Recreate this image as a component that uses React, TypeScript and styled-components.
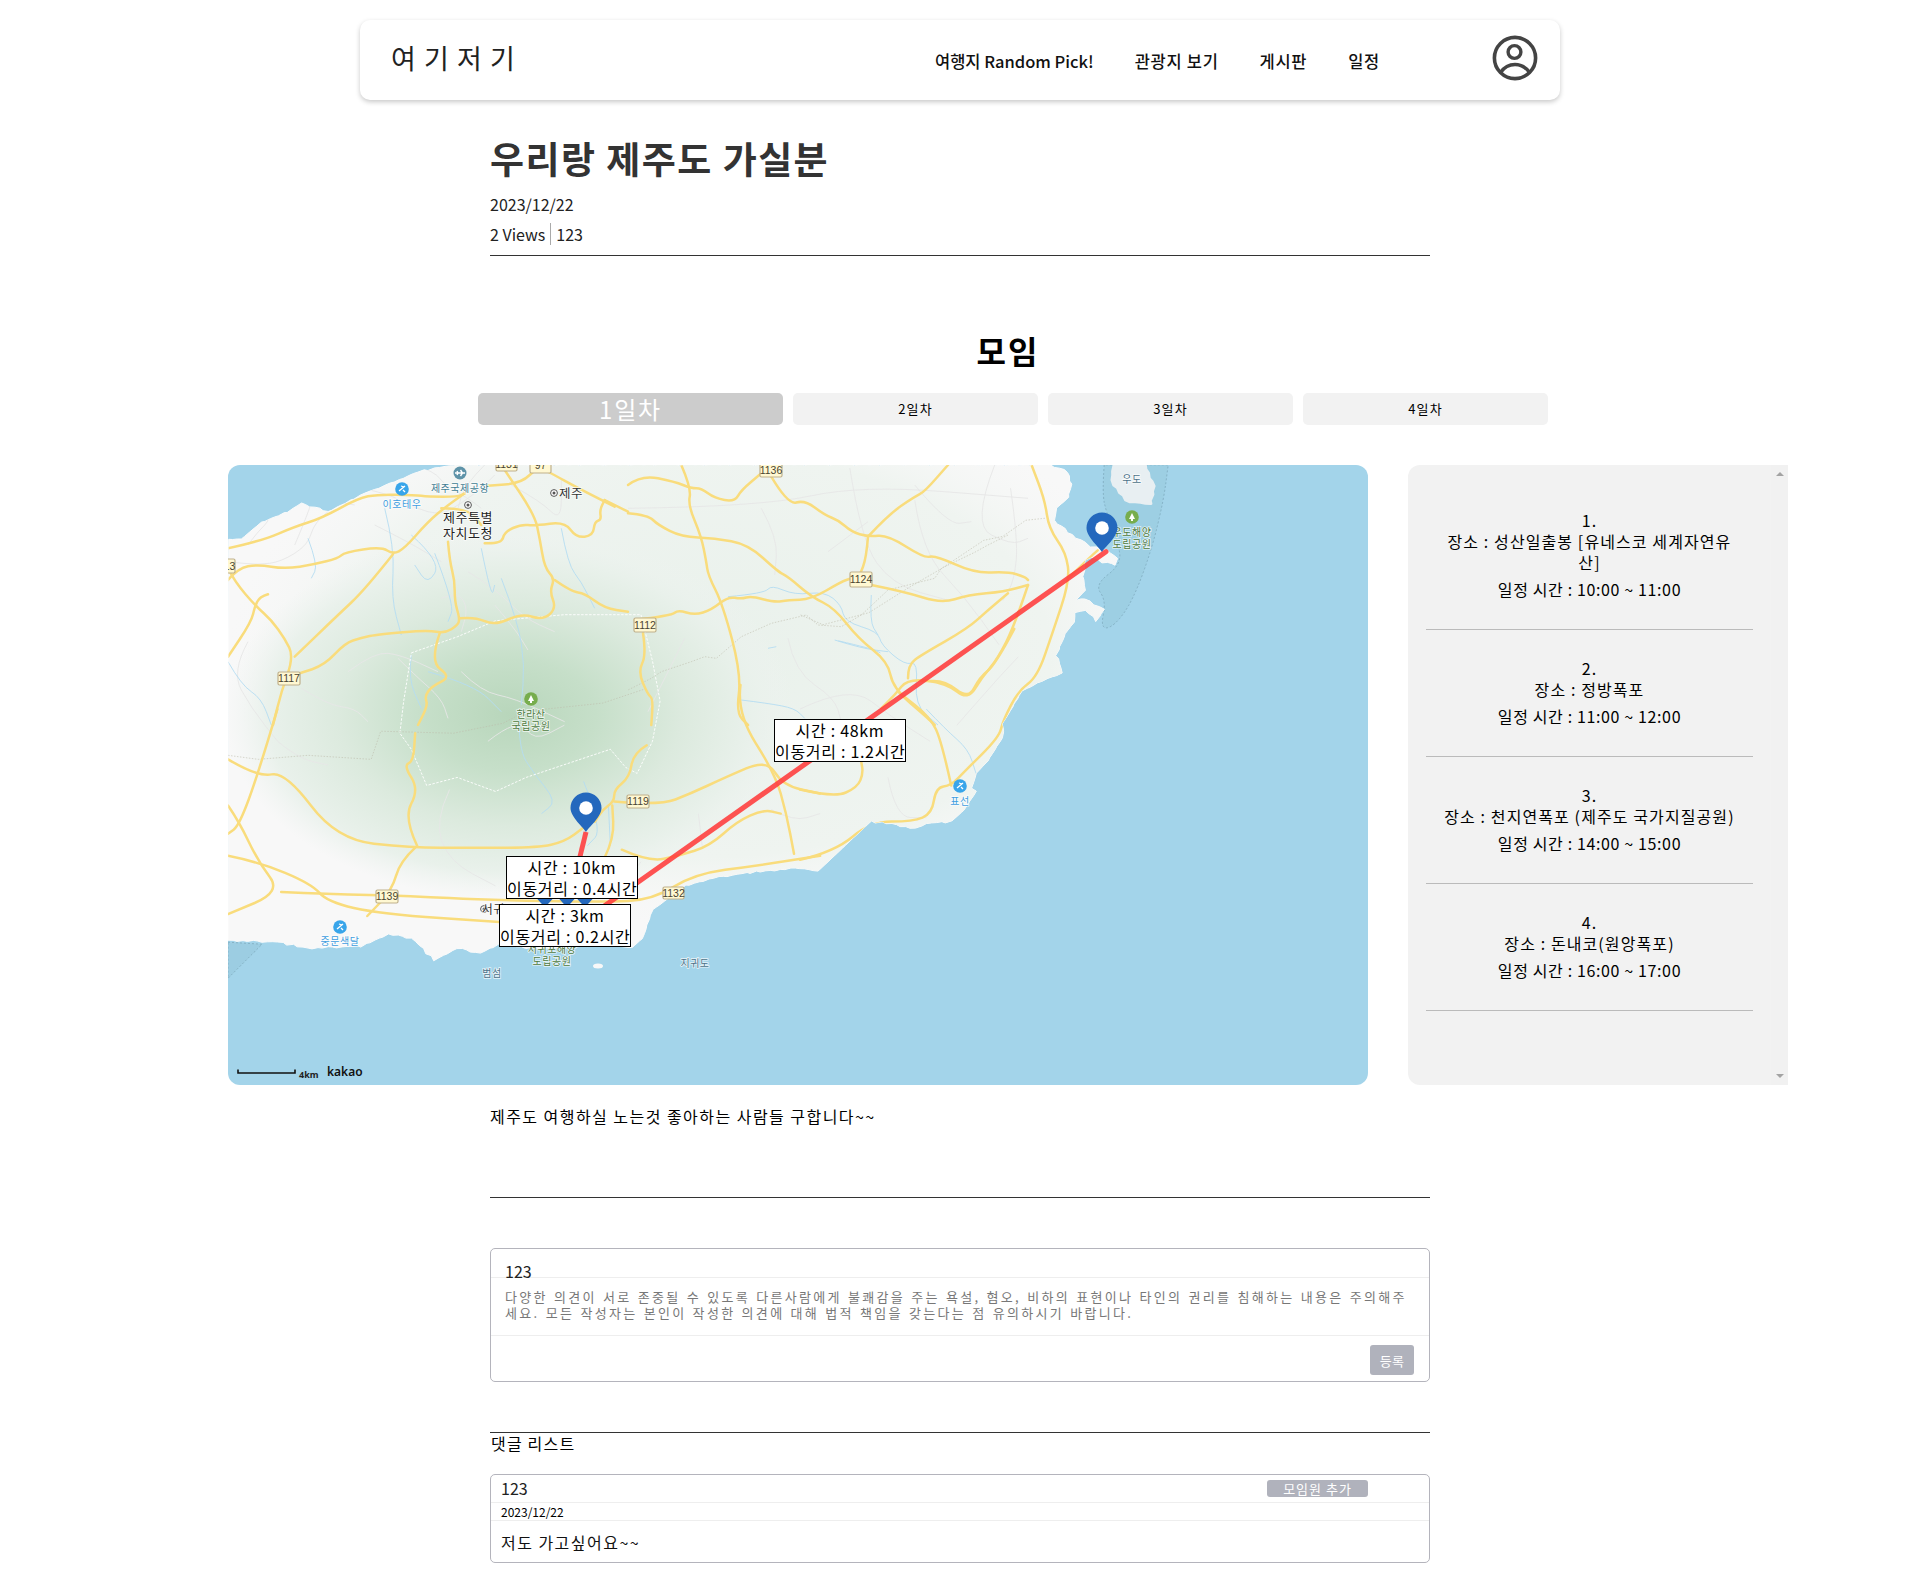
import React from 'react';
import styled, { createGlobalStyle } from 'styled-components';

const GlobalStyle = createGlobalStyle`
  html, body { margin: 0; padding: 0; background: #fff; }
  body { font-family: "Noto Sans CJK KR", "Noto Sans", sans-serif; color: #000; }
  * { box-sizing: border-box; }
`;

const Page = styled.div`
  width: 1920px;
  height: 1575px;
  overflow: hidden;
`;
const TopBar = styled.header`
  width: 1200px;
  height: 80px;
  margin: 20px auto 0;
  padding: 0 0 0 31px;
  display: flex;
  align-items: center;
  border-radius: 10px;
  background: #fff;
  box-shadow: 0 2px 5px rgba(0, 0, 0, 0.22);
`;
const Logo = styled.div`
  width: 125px;
  font-size: 27px;
  letter-spacing: 8.2px;
  line-height: 36px;
  margin-top: -4px;
  white-space: nowrap;
  color: #222;
`;
const Nav = styled.nav`
  display: flex;
  gap: 41px;
  margin-left: 419px;
  margin-top: 1px;
`;
const NavLink = styled.a<{ $spread?: boolean }>`
  font-size: 16.5px;
  font-weight: 500;
  line-height: 24px;
  color: #111;
  white-space: nowrap;
  letter-spacing: ${(p) => (p.$spread ? '0.7px' : '0')};
`;
const Avatar = styled.svg`
  width: 50px;
  height: 50px;
  margin-left: auto;
  margin-right: 20px;
  margin-top: -4px;
`;
const Column = styled.div`
  width: 940px;
  margin: 0 auto;
`;
const TitleBlock = styled(Column)`
  padding: 33px 0 10px;
  border-bottom: 1px solid #333;
`;
const Title = styled.h1`
  margin: 0;
  font-size: 37px;
  font-weight: 700;
  line-height: 50px;
  letter-spacing: 1.45px;
  color: #333;
`;
const DateText = styled.div`
  margin-top: 9.5px;
  font-size: 16px;
  line-height: 22px;
  color: #222;
`;
const Meta = styled.div`
  margin-top: 8.5px;
  display: flex;
  font-size: 16px;
  line-height: 22px;
  color: #222;
`;
const MetaAuthor = styled.span`
  margin-left: 5px;
  padding-left: 5px;
  border-left: 1px solid #aaa;
`;
const Wide = styled.section`
  width: 1560px;
  margin-left: 228px;
`;
const Heading = styled.h2`
  margin: 71px 0 0;
  font-size: 32px;
  font-weight: 700;
  line-height: 46px;
  letter-spacing: 2px;
  text-align: center;
`;
const Tabs = styled.div`
  margin-top: 20px;
  padding-left: 250px;
  display: flex;
  gap: 10px;
`;
const Tab = styled.button<{ $active?: boolean }>`
  width: ${(p) => (p.$active ? 305 : 245)}px;
  height: 32px;
  padding: 0;
  border: 0;
  border-radius: 5px;
  font-family: inherit;
  line-height: 32px;
  font-size: ${(p) => (p.$active ? 24 : 13)}px;
  letter-spacing: ${(p) => (p.$active ? 1.8 : 1.2)}px;
  background: ${(p) => (p.$active ? '#ccc' : '#f2f2f2')};
  color: ${(p) => (p.$active ? '#fff' : '#000')};
`;
const MapRow = styled.div`
  margin-top: 40px;
  display: flex;
  gap: 40px;
`;
const MapFrame = styled.div`
  position: relative;
  width: 1140px;
  height: 620px;
  border-radius: 12px;
  overflow: hidden;
  background: #a3d4ea;
`;
const MapArt = styled.svg`
  display: block;
  width: 1140px;
  height: 620px;
`;
const RouteLabel = styled.div<{ $x: number; $y: number }>`
  position: absolute;
  left: ${(p) => p.$x}px;
  top: ${(p) => p.$y}px;
  width: 132px;
  height: 43px;
  background: #fff;
  border: 1px solid #000;
  font-size: 16px;
  line-height: 20.5px;
  letter-spacing: 0.7px;
  text-align: center;
  white-space: nowrap;
`;
const Panel = styled.aside`
  width: 380px;
  height: 620px;
  display: flex;
  background: #f2f2f2;
  border-radius: 12px 0 0 12px;
`;
const StopList = styled.div`
  flex: 1;
  padding: 16.7px 18px 0;
`;
const Stop = styled.div`
  padding: 28px 16px 29px;
  border-bottom: 1px solid #bbb;
  font-size: 16px;
  line-height: 21.33px;
  letter-spacing: 1.1px;
  text-align: center;
  word-break: break-all;
`;
const StopTime = styled.div`
  margin-top: 5px;
  letter-spacing: 0.63px;
`;
const ScrollColumn = styled.div`
  width: 17px;
  display: flex;
  flex-direction: column;
  justify-content: space-between;
  align-items: center;
  padding: 7px 0;
  background: #f1f1f1;
`;
const ArrowUp = styled.span`
  width: 0;
  height: 0;
  border-left: 4px solid transparent;
  border-right: 4px solid transparent;
  border-bottom: 4px solid #a3a3a3;
`;
const ArrowDown = styled.span`
  width: 0;
  height: 0;
  border-left: 4px solid transparent;
  border-right: 4px solid transparent;
  border-top: 4px solid #a3a3a3;
`;
const Description = styled(Column)`
  margin-top: 20px;
  height: 93px;
  border-bottom: 1px solid #333;
  font-size: 16px;
  line-height: 22px;
  letter-spacing: 1.46px;
`;
const CommentForm = styled(Column)`
  margin-top: 50px;
  height: 134px;
  border: 1px solid #b4b4bc;
  border-radius: 5px;
  display: flex;
  flex-direction: column;
`;
const FormName = styled.div`
  height: 29px;
  padding: 12px 14px 0;
  border-bottom: 1px solid #eee;
  font-size: 16px;
  line-height: 20px;
  color: #222;
`;
const FormHint = styled.div`
  height: 58px;
  padding: 11px 14px 0;
  border-bottom: 1px solid #eee;
  font-size: 13px;
  line-height: 16px;
  letter-spacing: 2.3px;
  word-spacing: 1px;
  color: #777;
  word-break: break-all;
`;
const FormFoot = styled.div`
  flex: 1;
  display: flex;
  justify-content: flex-end;
  padding: 9px 15px 0 0;
`;
const SubmitButton = styled.button`
  width: 44px;
  height: 30px;
  padding: 0;
  border: 0;
  border-radius: 3px;
  background: #b0b2bc;
  color: #fff;
  font-family: inherit;
  font-size: 13px;
  letter-spacing: 0.4px;
`;
const ListHead = styled(Column)`
  margin-top: 50px;
  border-top: 1px solid #333;
  font-size: 16px;
  line-height: 20px;
  letter-spacing: 1.2px;
  padding-left: 1px;
`;
const CommentCard = styled(Column)`
  margin-top: 21px;
  height: 89px;
  border: 1px solid #b4b4bc;
  border-radius: 5px;
`;
const CardTop = styled.div`
  height: 28px;
  padding: 0 61px 0 10px;
  display: flex;
  align-items: center;
  justify-content: space-between;
  border-bottom: 1px solid #eee;
  font-size: 16px;
  line-height: 22px;
  color: #222;
`;
const CardName = styled.span`
  margin-top: -2px;
`;
const AddButton = styled.button`
  width: 101px;
  height: 17px;
  padding: 0;
  border: 0;
  border-radius: 3px;
  background: #b0b2bc;
  color: #fff;
  font-family: inherit;
  font-size: 13px;
  letter-spacing: 1px;
  line-height: 17px;
`;
const CardDate = styled.div`
  height: 18px;
  padding-left: 10px;
  border-bottom: 1px solid #eee;
  font-size: 12px;
  line-height: 18px;
`;
const CardBody = styled.div`
  padding: 10px 0 0 10px;
  font-size: 16px;
  line-height: 22px;
  letter-spacing: 1.47px;
  color: #111;
`;

type P = number[];
const z3 = (p: P): P => [p[0] * 0.3827 - 8, p[1] * 0.4018 - 5];
const z4 = (p: P): P => [p[0] * 0.3827 + 572, p[1] * 0.4018 - 5];
const z10 = (p: P): P => [p[0] / 3, p[1] / 3];
const z11 = (p: P): P => [400 + p[0] / 3, p[1] / 3];

const pts = (flat: number[], f: (p: P) => P): P[] => {
  const out: P[] = [];
  for (let i = 0; i < flat.length; i += 2) out.push(f([flat[i], flat[i + 1]]));
  return out;
};
const fmt = (q: P) => `${q[0].toFixed(1)} ${q[1].toFixed(1)}`;
const line = (p: P[]) => 'M' + p.map(fmt).join('L');
const poly = (flat: number[], f: (p: P) => P) => pts(flat, f).join(' ');
const curve = (p: P[]) => {
  if (p.length < 3) return line(p);
  let d = `M${fmt(p[0])}`;
  for (let i = 1; i < p.length - 1; i++) {
    const mid = [(p[i][0] + p[i + 1][0]) / 2, (p[i][1] + p[i + 1][1]) / 2];
    d += `Q${fmt(p[i])} ${fmt(mid)}`;
  }
  return d + `L${fmt(p[p.length - 1])}`;
};
/* break a coast into short rough steps */
const roughen = (p: P[]) => {
  const out: P[] = [];
  let seed = 1;
  for (let i = 0; i < p.length - 1; i++) {
    const [ax, ay] = p[i];
    const [bx, by] = p[i + 1];
    const len = Math.hypot(bx - ax, by - ay);
    const n = Math.max(1, Math.round(len / 5));
    for (let k = 0; k < n; k++) {
      const t = k / n;
      seed = (seed * 137 + 53) % 211;
      const a = (seed / 211 - 0.5) * 1.8;
      out.push([ax + (bx - ax) * t + a, ay + (by - ay) * t - a]);
    }
  }
  out.push(p[p.length - 1]);
  return out;
};

const landPath =
  line([
    ...roughen([
      ...pts([0, 225, 40, 222, 100, 172, 180, 140, 220, 115, 300, 140, 380, 100, 410, 85, 500, 50, 570, 20, 650, 5, 680, 0], z10),
      ...pts(
        [655, 12, 700, 30, 710, 60, 700, 95, 670, 120, 665, 150, 700, 180, 745, 205, 760, 215, 800, 225, 830, 245, 825, 260, 790, 255, 765, 240, 745, 250, 740, 300, 745, 325, 720, 350, 745, 345, 795, 372, 775, 400, 745, 375, 720, 378, 715, 405, 695, 430, 670, 485, 685, 530, 620, 555, 580, 575, 555, 615, 530, 655, 530, 690, 490, 750, 460, 780, 450, 815, 460, 825, 430, 870, 395, 900, 330, 905, 300, 918, 240, 905, 185, 900, 140, 940, 90, 985, 45, 1025, 0, 1015],
        z4
      ),
      ...pts([1400, 1025, 1290, 1040, 1215, 1060, 1130, 1120, 1105, 1190, 1075, 1215, 1000, 1205, 900, 1215, 800, 1215, 740, 1200, 680, 1228, 620, 1215, 560, 1245, 500, 1190, 440, 1180, 370, 1210, 230, 1215, 150, 1200, 21, 1195], z3),
    ]),
    [0, 470],
  ]) + 'Z';

const roads: P[][] = [
  ...[
    [0, 250, 100, 228, 200, 185, 280, 160, 390, 100, 450, 88, 560, 90, 600, 95, 690, 95, 710, 85],
    [0, 345, 30, 310, 90, 298, 170, 312, 260, 298, 330, 280, 350, 262, 460, 245, 495, 268, 530, 250, 600, 170, 660, 120, 710, 85],
    [495, 268, 410, 375, 330, 450, 200, 575],
    [660, 230, 665, 290, 680, 345, 680, 410, 695, 460, 690, 480, 650, 505, 600, 495, 450, 508, 400, 518, 350, 535, 290, 600, 215, 625],
    [695, 460, 740, 455, 800, 482, 880, 445, 945, 465, 985, 430, 965, 380, 980, 340, 950, 310, 935, 220, 920, 150, 830, 15],
    [980, 345, 1030, 380, 1070, 385, 1130, 430, 1200, 440],
    [635, 505, 605, 590, 670, 635, 610, 665, 590, 695, 600, 720, 570, 780],
    [0, 310, 20, 350, 85, 425, 130, 465, 170, 520, 197, 575, 160, 680, 135, 780],
    [120, 388, 95, 395, 80, 425, 70, 470, 0, 575],
    [770, 235, 820, 237, 830, 200, 880, 178, 920, 182, 1010, 170, 1045, 218, 1095, 212, 1100, 170, 1120, 165, 1115, 135, 1130, 105],
    [1160, 125, 1060, 75, 970, 25, 930, 5, 880, 55, 780, 62],
    [1130, 105, 1200, 140],
    [640, 130, 720, 130, 760, 180],
  ].map((r) => pts(r, z10)),
  ...[
    [0, 60, 40, 30, 140, 50, 190, 70, 220, 70, 260, 100, 320, 110, 340, 75, 400, 25],
    [160, 0, 190, 70, 180, 120, 220, 215, 235, 290, 240, 330, 285, 420, 340, 630, 325, 745, 360, 780],
    [0, 145, 60, 150, 90, 180, 160, 215, 260, 220, 360, 238, 450, 320, 480, 335, 550, 395, 620, 430, 690, 520, 780, 590, 795, 670, 900, 760, 920, 780],
    [20, 465, 130, 452, 150, 435, 200, 450, 250, 435, 300, 395, 340, 402, 370, 393, 440, 412, 480, 405, 550, 403, 640, 350, 670, 340],
    [430, 35, 480, 120, 530, 105, 590, 150, 630, 165, 670, 200, 720, 215, 780, 210, 890, 280, 920, 270, 1040, 325, 1140, 320, 1190, 335, 1200, 345],
    [720, 215, 715, 280, 695, 330],
    [730, 360, 830, 380, 940, 415, 1020, 390, 1130, 380, 1200, 360],
    [720, 215, 780, 150, 860, 95, 890, 80, 960, 0],
    [1200, 360, 1160, 480, 1110, 580, 1060, 640, 1020, 705, 955, 655, 840, 640, 800, 690, 760, 730],
    [840, 640, 840, 600, 880, 570, 1020, 490, 1080, 435, 1140, 385],
    [45, 505, 55, 570, 30, 620, 60, 690, 75, 700, 70, 780],
  ].map((r) => pts(r, z11)),
  ...[
    [1115, 710, 1080, 730, 1070, 790, 1030, 820, 1030, 850, 1000, 870, 980, 900],
    [1030, 850, 1150, 860, 1230, 830, 1320, 790, 1430, 745, 1470, 810, 1568, 830],
    [1360, 560, 1350, 630, 1450, 780, 1480, 880, 1500, 980],
    [21, 745, 100, 790, 170, 775, 305, 945, 500, 965, 650, 965, 830, 965, 900, 950, 950, 915],
    [150, 620, 100, 780, 50, 910, 21, 930],
    [21, 860, 50, 900, 100, 1000, 160, 1075, 21, 1130],
    [21, 985, 100, 1000, 240, 1055, 280, 1100, 420, 1130, 730, 1150],
    [160, 1075, 280, 1080, 500, 1085, 700, 1095, 1000, 1100, 1130, 1095, 1240, 1030, 1400, 1010, 1568, 985],
    [510, 965, 470, 1000, 450, 1070, 385, 1135],
    [515, 960, 480, 890, 520, 820, 480, 760, 505, 750, 510, 680],
    [1005, 990, 1030, 940, 1025, 860],
    [1050, 970, 1120, 1000, 1200, 985, 1280, 960, 1350, 900, 1420, 870, 1465, 880],
  ].map((r) => pts(r, z3)),
  ...[
    [0, 820, 90, 840, 150, 815, 165, 780, 160, 750],
    [0, 995, 90, 975, 185, 900, 295, 900, 345, 880, 355, 815, 395, 810, 430, 775, 520, 690, 530, 650, 570, 575, 620, 540, 660, 430, 705, 300, 695, 230, 650, 170, 640, 100, 605, 12],
    [395, 810, 370, 700, 340, 640, 260, 580],
    [700, 295, 760, 240, 778, 225],
    [560, 420, 510, 510, 470, 540, 440, 595, 380, 550, 320, 550],
  ].map((r) => pts(r, z4)),
];

const minorSets: { f: (p: P) => P; lines: number[][] }[] = [
  {
    f: z10,
    lines: [
      [0, 130, 100, 105, 170, 120, 260, 100, 380, 120],
      [200, 240, 260, 100, 250, 70],
      [-10, 175, 60, 135, 100, 130, 130, 160, 90, 200, 60, 240],
      [400, 70, 480, 85, 560, 130, 640, 150, 700, 115, 760, 70, 800, 30],
      [560, 0, 620, 20, 650, 60, 720, 100, 760, 130],
      [770, 0, 710, 60, 690, 130],
      [850, 60, 940, 110, 1000, 170, 1000, 40],
      [440, 180, 540, 230, 640, 290],
      [720, 320, 800, 370, 890, 460, 980, 500],
      [800, 420, 860, 490, 900, 555],
      [640, 400, 690, 380, 720, 430, 700, 500],
      [510, 580, 560, 630, 640, 700, 660, 760],
      [300, 140, 260, 170, 240, 240, 160, 290, 90, 300, 0, 290],
      [700, 620, 760, 680, 860, 700, 1010, 770],
      [360, 620, 440, 560, 520, 570, 630, 620],
      [150, 830, 210, 880, 300, 900],
      [220, 670, 300, 720, 380, 730, 420, 770],
      [60, 530, 10, 620, 70, 730, 150, 830],
    ],
  },
  {
    f: z11,
    lines: [
      [0, 130, 400, 125, 700, 60, 1200, 100],
      [600, 260, 720, 170],
      [860, 60, 960, 180, 1030, 170],
      [60, 740, 170, 520],
      [1100, 0, 1030, 180, 1150, 240, 1200, 220],
      [400, 130, 450, 220, 440, 330],
      [480, 520, 500, 620, 620, 700, 640, 770],
    ],
  },
  {
    f: z3,
    lines: [
      [700, 700, 780, 640, 820, 700, 900, 660],
      [600, 820, 560, 900, 600, 1000, 720, 1060],
      [900, 990, 1000, 1000, 1050, 1060, 1100, 1000],
      [1250, 880, 1260, 960],
      [1440, 870, 1500, 900, 1568, 880],
    ],
  },
  {
    f: z4,
    lines: [
      [300, 100, 320, 230, 430, 340, 520, 460],
      [130, 20, 160, 200, 240, 310, 390, 350],
      [550, 70, 570, 200, 560, 300, 530, 350],
      [0, 620, 130, 560, 240, 640, 340, 700],
      [230, 790, 250, 890, 330, 890],
      [570, 490, 520, 540, 410, 660],
    ],
  },
];

const streamSets: { f: (p: P) => P; lines: number[][] }[] = [
  {
    f: z10,
    lines: [
      [470, 130, 500, 250, 490, 400, 520, 510],
      [550, 210, 640, 290, 600, 360, 560, 300],
      [620, 265, 680, 420, 660, 470],
      [760, 250, 790, 400, 800, 360],
      [820, 340, 870, 470, 890, 600, 880, 720],
      [1000, 190, 1020, 300, 1060, 350, 1100, 430],
      [240, 220, 270, 300, 250, 340],
      [0, 590, 40, 660, 100, 700, 130, 780],
      [550, 570, 540, 640, 580, 730],
      [600, 620, 740, 660, 820, 740],
    ],
  },
  {
    f: z11,
    lines: [
      [300, 395, 410, 385, 430, 360, 500, 390, 590, 380, 640, 420, 650, 470, 750, 500, 760, 540, 830, 600, 870, 590, 860, 720, 930, 780],
      [620, 525, 700, 550, 780, 560],
      [340, 705, 420, 715, 500, 730, 530, 760],
      [730, 390, 725, 470, 750, 510],
      [420, 550, 445, 545],
    ],
  },
  {
    f: z3,
    lines: [
      [780, 620, 780, 720, 820, 780, 880, 850, 840, 880],
      [950, 800, 1000, 920, 960, 960],
      [1015, 860, 1020, 960],
    ],
  },
  {
    f: z4,
    lines: [
      [330, 620, 380, 670, 440, 720, 460, 780],
      [100, 450, 190, 470, 210, 480],
    ],
  },
];

const trails: { f: (p: P) => P; r: number[] }[] = [
  { f: z3, r: [21, 735, 100, 745, 230, 735, 395, 745, 420, 675, 610, 680, 740, 655, 800, 625, 1000, 605, 1110, 570] },
  {
    f: z11,
    r: [1140, 210, 1080, 240, 1040, 262, 940, 310, 920, 340, 780, 375, 700, 450, 640, 485, 570, 480, 535, 450, 430, 475, 340, 515, 265, 580, 230, 575, 190, 590, 100, 620, 70, 640, 0, 675],
  },
  { f: z4, r: [640, 145, 590, 150, 530, 190, 480, 200, 370, 270, 280, 320, 180, 380, 60, 410, 0, 385] },
];

const shields = [
  { x: 50, y: 207, w: 22, h: 13, t: '1117' },
  { x: 406, y: 153, w: 22, h: 14, t: '1112' },
  { x: 532, y: -2, w: 22, h: 14, t: '1136' },
  { x: 622, y: 107, w: 22, h: 15, t: '1124' },
  { x: 268, y: -7, w: 21, h: 13, t: '1131' },
  { x: 302, y: -7, w: 21, h: 15, t: '97' },
  { x: 399, y: 330, w: 22, h: 13, t: '1119' },
  { x: 148, y: 425, w: 22, h: 13, t: '1139' },
  { x: 435, y: 422, w: 21, h: 12, t: '1132' },
  { x: -14, y: 94, w: 21, h: 14, t: '1113' },
];

const labels = [
  { x: 232, y: 27, t: '제주국제공항', s: 10, c: '#3f7c92' },
  { x: 174, y: 43, t: '이호테우', s: 10, c: '#3f9ee0' },
  { x: 240, y: 57, t: '제주특별', s: 13, c: '#222' },
  { x: 240, y: 73, t: '자치도청', s: 13, c: '#222' },
  { x: 343, y: 33, t: '제주', s: 12.5, c: '#333' },
  { x: 303, y: 253, t: '한라산', s: 10, c: '#4d7a3f' },
  { x: 303, y: 265, t: '국립공원', s: 10, c: '#4d7a3f' },
  { x: 112, y: 480, t: '중문색달', s: 10, c: '#3f9ee0' },
  { x: 271, y: 449, t: '서귀포', s: 12, c: '#333' },
  { x: 324, y: 488, t: '서귀포해양', s: 10, c: '#4d7a3f' },
  { x: 324, y: 500, t: '도립공원', s: 10, c: '#4d7a3f' },
  { x: 264, y: 512, t: '범섬', s: 10, c: '#4c7289' },
  { x: 467, y: 502, t: '지귀도', s: 10, c: '#4c7289' },
  { x: 732, y: 340, t: '표선', s: 10, c: '#3f9ee0' },
  { x: 904, y: 18, t: '우도', s: 10, c: '#4c7289' },
  { x: 904, y: 71, t: '우도해양', s: 10, c: '#4d7a3f' },
  { x: 904, y: 83, t: '도립공원', s: 10, c: '#4d7a3f' },
];

const beachIcons = [
  [174, 24],
  [112, 462],
  [732, 321],
];
const parkIcons = [
  [303, 234],
  [904, 52],
];
const places = [
  [240, 40],
  [326, 28],
  [256, 444],
];
const pins = [
  [317, 419],
  [339, 419],
  [357, 419],
  [358, 343],
  [874, 63],
];

const Pin = ({ x, y }: { x: number; y: number }) => (
  <g transform={`translate(${x} ${y})`}>
    <path d="M0 24C-2 20-15.5 9-15.5 0A15.5 15.5 0 0 1 15.5 0C15.5 9 2 20 0 24Z" fill="#2468bd" />
    <circle r="6.8" fill="#fff" />
  </g>
);

const MapDrawing = () => (
  <MapArt viewBox="0 0 1140 620">
    <defs>
      <radialGradient id="mount" cx="0.5" cy="0.5" r="0.5">
        <stop offset="0" stopColor="#b8d6bb" />
        <stop offset="0.3" stopColor="#c6dfc9" />
        <stop offset="0.6" stopColor="#dceade" />
        <stop offset="0.85" stopColor="#e9f1eb" />
        <stop offset="1" stopColor="#eef3f0" stopOpacity="0" />
      </radialGradient>
      <radialGradient id="tint" cx="0.5" cy="0.5" r="0.5">
        <stop offset="0" stopColor="#e9f1eb" />
        <stop offset="0.75" stopColor="#eff4f0" />
        <stop offset="1" stopColor="#f6f7f6" stopOpacity="0" />
      </radialGradient>
      <clipPath id="landClip">
        <path d={landPath} />
      </clipPath>
    </defs>
    <path
      d={curve(pts([795, 12, 790, 80, 800, 130, 830, 200, 840, 260, 770, 310, 800, 350, 785, 420, 820, 415, 870, 350, 920, 220, 950, 100, 962, 12], z4)) + 'Z'}
      fill="#9dcfe3"
      stroke="#7aa5b8"
      strokeWidth="0.7"
      strokeDasharray="2 2"
    />
    <path
      d={line(pts([21, 1200, 110, 1205, 21, 1290], z3)) + 'Z'}
      fill="#9ccde2"
      stroke="#7aa5b8"
      strokeWidth="0.7"
      strokeDasharray="2 2"
    />
    <path d={landPath} fill="#f8f8f8" stroke="#fbfbfb" strokeWidth="1" strokeLinejoin="round" />
    <path
      d={line(roughen(pts([820, 15, 900, 12, 925, 65, 915, 110, 850, 100, 815, 50, 820, 15], z4))) + 'Z'}
      fill="#e8eff2"
      stroke="#e8eff2"
      strokeWidth="3"
      strokeLinejoin="round"
    />
    <ellipse cx="370" cy="501" rx="5" ry="2.5" fill="#f8f8f8" />
    <g clipPath="url(#landClip)">
      <ellipse cx="470" cy="190" rx="470" ry="270" fill="url(#tint)" />
      <ellipse cx="282" cy="250" rx="285" ry="185" fill="url(#mount)" />
      {minorSets.map((set, si) =>
        set.lines.map((r, i) => (
          <path key={`${si}-${i}`} d={curve(pts(r, set.f))} fill="none" stroke="#e6e7e6" strokeWidth="0.9" />
        ))
      )}
      {streamSets.map((set, si) =>
        set.lines.map((r, i) => (
          <path key={`${si}-${i}`} d={curve(pts(r, set.f))} fill="none" stroke="#b4ddf2" strokeWidth="0.9" />
        ))
      )}
      <polyline
        points={poly(
          [500, 480, 620, 440, 720, 400, 900, 385, 1100, 385, 1130, 500, 1150, 600, 1130, 700, 1090, 780, 1060, 765, 1020, 720, 800, 790, 720, 825, 620, 790, 540, 810, 500, 720, 470, 680, 480, 600, 500, 480],
          z3
        )}
        fill="none"
        stroke="#fff"
        strokeOpacity="0.9"
        strokeWidth="1"
        strokeDasharray="2.5 1.5"
      />
      {trails.map((t, i) => (
        <polyline
          key={i}
          points={poly(t.r, t.f)}
          fill="none"
          stroke="#bcbaab"
          strokeOpacity="0.8"
          strokeWidth="0.7"
          strokeDasharray="1.5 1.5"
        />
      ))}
      {roads.map((r, i) => (
        <path
          key={i}
          d={curve(r)}
          fill="none"
          stroke="#f9dc7c"
          strokeWidth="2.5"
          strokeLinejoin="round"
          strokeLinecap="round"
        />
      ))}
    </g>
    <line x1="878" y1="86.6" x2="355" y2="456" stroke="#ff3b3b" strokeOpacity="0.88" strokeWidth="5" strokeLinecap="round" />
    <line x1="358" y1="367" x2="345" y2="420" stroke="#ff3b3b" strokeOpacity="0.88" strokeWidth="5" />
    {shields.map((s) => (
      <g key={s.t}>
        <rect x={s.x} y={s.y} width={s.w} height={s.h} rx="1.5" fill="#fff8d2" stroke="#bfb08c" strokeWidth="1.2" />
        <text
          x={s.x + s.w / 2}
          y={s.y + s.h / 2 + 3.6}
          textAnchor="middle"
          fontFamily='"Liberation Sans", sans-serif'
          fontSize="10.5"
          fill="#4a4430"
        >
          {s.t}
        </text>
      </g>
    ))}
    <circle cx="232" cy="8" r="6.5" fill="#5e93a8" />
    <path d="M227 8h10M232.5 5l2 3-2 3M229 6l1 2-1 2" fill="none" stroke="#fff" strokeWidth="1.4" />
    {beachIcons.map(([x, y], i) => (
      <g key={i}>
        <circle cx={x} cy={y} r="6.8" fill="#38a5ea" />
        <path
          d={`M${x - 3} ${y + 2}L${x + 3} ${y - 3}M${x - 1} ${y - 3}l3 1M${x + 1} ${y + 1}l2 2`}
          stroke="#fff"
          strokeWidth="1.3"
          fill="none"
        />
      </g>
    ))}
    {parkIcons.map(([x, y], i) => (
      <g key={i}>
        <circle cx={x} cy={y} r="6.8" fill="#77ad4d" />
        <path d={`M${x} ${y - 4}l3 6h-2v2h-2v-2h-2Z`} fill="#fff" />
      </g>
    ))}
    {places.map(([x, y], i) => (
      <g key={i}>
        <circle cx={x} cy={y} r="3.4" fill="#fff" stroke="#555" strokeWidth="1" />
        <circle cx={x} cy={y} r="1.5" fill="#555" />
      </g>
    ))}
    {labels.map((l) => (
      <text
        key={l.t + l.y}
        x={l.x}
        y={l.y}
        textAnchor="middle"
        fontFamily='"Noto Sans CJK KR", sans-serif'
        fontSize={l.s}
        letterSpacing="0.5"
        fill={l.c}
        stroke="#fff"
        strokeOpacity="0.75"
        strokeWidth="1.6"
        paintOrder="stroke"
      >
        {l.t}
      </text>
    ))}
    {pins.map(([x, y], i) => (
      <Pin key={i} x={x} y={y} />
    ))}
    <path d="M10 604.5v3.5h57v-3.5" fill="none" stroke="#111" strokeWidth="1.6" />
    <text x="71" y="613" fontFamily='"Noto Sans", sans-serif' fontSize="9" fontWeight="700" fill="#222">
      4km
    </text>
    <text x="99" y="611" fontFamily='"Noto Sans", sans-serif' fontSize="12" fontWeight="600" fill="#111">
      kakao
    </text>
  </MapArt>
);

const stops = [
  { n: '1.', place: '장소 : 성산일출봉 [유네스코 세계자연유산]', time: '일정 시간 : 10:00 ~ 11:00' },
  { n: '2.', place: '장소 : 정방폭포', time: '일정 시간 : 11:00 ~ 12:00' },
  { n: '3.', place: '장소 : 천지연폭포 (제주도 국가지질공원)', time: '일정 시간 : 14:00 ~ 15:00' },
  { n: '4.', place: '장소 : 돈내코(원앙폭포)', time: '일정 시간 : 16:00 ~ 17:00' },
];

const routeLabels = [
  { x: 546, y: 254, a: '시간 : 48km', b: '이동거리 : 1.2시간' },
  { x: 278, y: 391, a: '시간 : 10km', b: '이동거리 : 0.4시간' },
  { x: 271, y: 439, a: '시간 : 3km', b: '이동거리 : 0.2시간' },
];

export default function App() {
  return (
    <Page>
      <GlobalStyle />
      <TopBar>
        <Logo>여기저기</Logo>
        <Nav>
          <NavLink>여행지 Random Pick!</NavLink>
          <NavLink $spread>관광지 보기</NavLink>
          <NavLink $spread>게시판</NavLink>
          <NavLink $spread>일정</NavLink>
        </Nav>
        <Avatar viewBox="0 0 50 50">
          <circle cx="25" cy="25" r="20.6" fill="none" stroke="#444" strokeWidth="3.6" />
          <circle cx="24.5" cy="19" r="6.4" fill="none" stroke="#444" strokeWidth="3.4" />
          <path d="M10.5 39.5C15 33 20 31.5 25 31.5S35 33 39.5 39.5" fill="none" stroke="#444" strokeWidth="3.4" />
        </Avatar>
      </TopBar>
      <TitleBlock>
        <Title>우리랑 제주도 가실분</Title>
        <DateText>2023/12/22</DateText>
        <Meta>
          <span>2 Views</span>
          <MetaAuthor>123</MetaAuthor>
        </Meta>
      </TitleBlock>
      <Wide>
        <Heading>모임</Heading>
        <Tabs>
          <Tab $active>1일차</Tab>
          <Tab>2일차</Tab>
          <Tab>3일차</Tab>
          <Tab>4일차</Tab>
        </Tabs>
        <MapRow>
          <MapFrame>
            <MapDrawing />
            {routeLabels.map((l) => (
              <RouteLabel key={l.a} $x={l.x} $y={l.y}>
                {l.a}
                <br />
                {l.b}
              </RouteLabel>
            ))}
          </MapFrame>
          <Panel>
            <StopList>
              {stops.map((s) => (
                <Stop key={s.n}>
                  {s.n}
                  <br />
                  {s.place}
                  <StopTime>{s.time}</StopTime>
                </Stop>
              ))}
            </StopList>
            <ScrollColumn>
              <ArrowUp />
              <ArrowDown />
            </ScrollColumn>
          </Panel>
        </MapRow>
      </Wide>
      <Description>제주도 여행하실 노는것 좋아하는 사람들 구합니다~~</Description>
      <CommentForm>
        <FormName>123</FormName>
        <FormHint>
          다양한 의견이 서로 존중될 수 있도록 다른사람에게 불쾌감을 주는 욕설, 혐오, 비하의 표현이나 타인의 권리를 침해하는 내용은 주의해주세요. 모든 작성자는 본인이 작성한 의견에 대해 법적 책임을 갖는다는 점 유의하시기 바랍니다.
        </FormHint>
        <FormFoot>
          <SubmitButton>등록</SubmitButton>
        </FormFoot>
      </CommentForm>
      <ListHead>댓글 리스트</ListHead>
      <CommentCard>
        <CardTop>
          <CardName>123</CardName>
          <AddButton>모임원 추가</AddButton>
        </CardTop>
        <CardDate>2023/12/22</CardDate>
        <CardBody>저도 가고싶어요~~</CardBody>
      </CommentCard>
    </Page>
  );
}
